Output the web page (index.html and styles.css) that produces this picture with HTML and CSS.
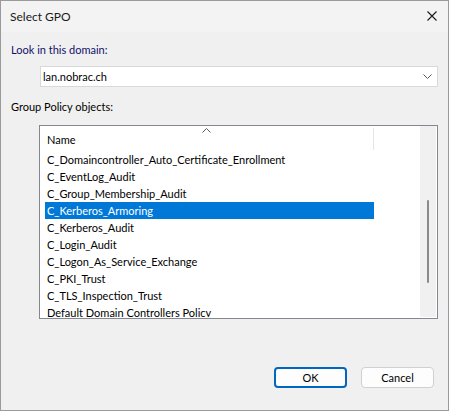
FILE: index.html
```html
<!DOCTYPE html>
<html lang="en">
<head>
    <meta charset="UTF-8">
    <title>Select GPO</title>
    <link rel="stylesheet" href="styles.css">
</head>
<body>
    <div class="window">
        <div class="titlebar">
            <span class="title">Select GPO</span>
            <svg class="close-icon" width="10" height="10" viewBox="0 0 10 10">
                <path d="M0.5 0.5 L9.5 9.5 M9.5 0.5 L0.5 9.5" stroke="#1a1a1a" stroke-width="1.1" fill="none"/>
            </svg>
        </div>

        <div class="content">
            <div class="label label-domain">Look in this domain:</div>
            <div class="combo">
                <span>lan.nobrac.ch</span>
                <svg width="9" height="5" viewBox="0 0 9 5">
                    <path d="M0.5 0.5 L4.5 4.5 L8.5 0.5" stroke="#5a5a5a" stroke-width="1" fill="none"/>
                </svg>
            </div>

            <div class="label label-gpo">Group Policy objects:</div>
            <div class="listbox">
                <div class="list-main">
                    <div class="list-header">
                        <div class="header-cell">
                            <svg class="sort-arrow" width="9" height="5" viewBox="0 0 9 5">
                                <path d="M0.5 4.5 L4.5 0.5 L8.5 4.5" stroke="#5a5a5a" stroke-width="1" fill="none"/>
                            </svg>
                            <span>Name</span>
                        </div>
                    </div>
                    <div class="rows">
                        <div class="row">C_Domaincontroller_Auto_Certificate_Enrollment</div>
                        <div class="row">C_EventLog_Audit</div>
                        <div class="row">C_Group_Membership_Audit</div>
                        <div class="row selected">C_Kerberos_Armoring</div>
                        <div class="row">C_Kerberos_Audit</div>
                        <div class="row">C_Login_Audit</div>
                        <div class="row">C_Logon_As_Service_Exchange</div>
                        <div class="row">C_PKI_Trust</div>
                        <div class="row">C_TLS_Inspection_Trust</div>
                        <div class="row">Default Domain Controllers Policy</div>
                    </div>
                </div>
                <div class="scrollbar">
                    <div class="thumb"></div>
                </div>
            </div>
        </div>

        <div class="buttons">
            <button class="btn btn-default">OK</button>
            <button class="btn">Cancel</button>
        </div>
    </div>
</body>
</html>
```

FILE: styles.css
```css
body {
    margin: 0;
    font-family: Lato, "Segoe UI", sans-serif;
    font-size: 11px;
    color: #000;
}
.window {
    width: 449px;
    height: 411px;
    box-sizing: border-box;
    border: 1px solid #9a9a9a;
    background-color: #f0f0f0;
    display: flex;
    flex-direction: column;
}
.titlebar {
    height: 30px;
    background-color: #f3f3f3;
    display: flex;
    align-items: center;
    justify-content: space-between;
    padding: 0 11px 1px 9px;
}
.title {
    font-size: 12px;
    color: #1a1a1a;
}
.content {
    padding: 0 10px 0 10px;
    flex: 1;
}
.label {
    line-height: 15px;
}
.label-domain {
    margin-top: 10px;
    color: #10106a;
}
.label-gpo {
    margin-top: 12px;
}
.combo {
    margin: 9px 0 0 29px;
    height: 21px;
    box-sizing: border-box;
    border: 1px solid #d9d9d9;
    background-color: #fff;
    display: flex;
    align-items: center;
    justify-content: space-between;
    padding: 0 5px 0 2px;
}
.listbox {
    margin: 11px 0 0 28px;
    height: 194px;
    box-sizing: border-box;
    border: 1px solid #828790;
    background-color: #fff;
    display: flex;
    padding: 0 1px 1px 0;
}
.list-main {
    flex: 1;
    overflow: hidden;
}
.list-header {
    height: 25px;
    display: flex;
}
.header-cell {
    position: relative;
    width: 333px;
    border-right: 1px solid #e5e5e5;
    margin: 2px 0 1px 0;
}
.sort-arrow {
    position: absolute;
    top: 0;
    left: 162px;
}
.header-cell span {
    display: block;
    padding: 4px 0 0 7px;
    line-height: 15px;
}
.rows {
    height: 167px;
    overflow: hidden;
}
.row {
    width: 329px;
    margin-left: 5px;
    height: 17px;
    line-height: 17px;
    padding-left: 2px;
    box-sizing: border-box;
    white-space: nowrap;
}
.row.selected {
    background-color: #0078d7;
    color: #fff;
}
.scrollbar {
    width: 16px;
    background-color: #f0f0f0;
    position: relative;
}
.thumb {
    position: absolute;
    left: 7px;
    top: 74px;
    width: 2px;
    height: 83px;
    border-radius: 1px;
    background-color: #8a8a8a;
}
.buttons {
    display: flex;
    justify-content: flex-end;
    gap: 14px;
    padding: 0 14px 22px 0;
}
.btn {
    width: 73px;
    height: 21px;
    box-sizing: border-box;
    font-family: inherit;
    font-size: 11px;
    background-color: #fdfdfd;
    border: 1px solid #d0d0d0;
    border-radius: 4px;
    padding: 0;
    color: #000;
}
.btn-default {
    border: 2px solid #0067c0;
}
```
